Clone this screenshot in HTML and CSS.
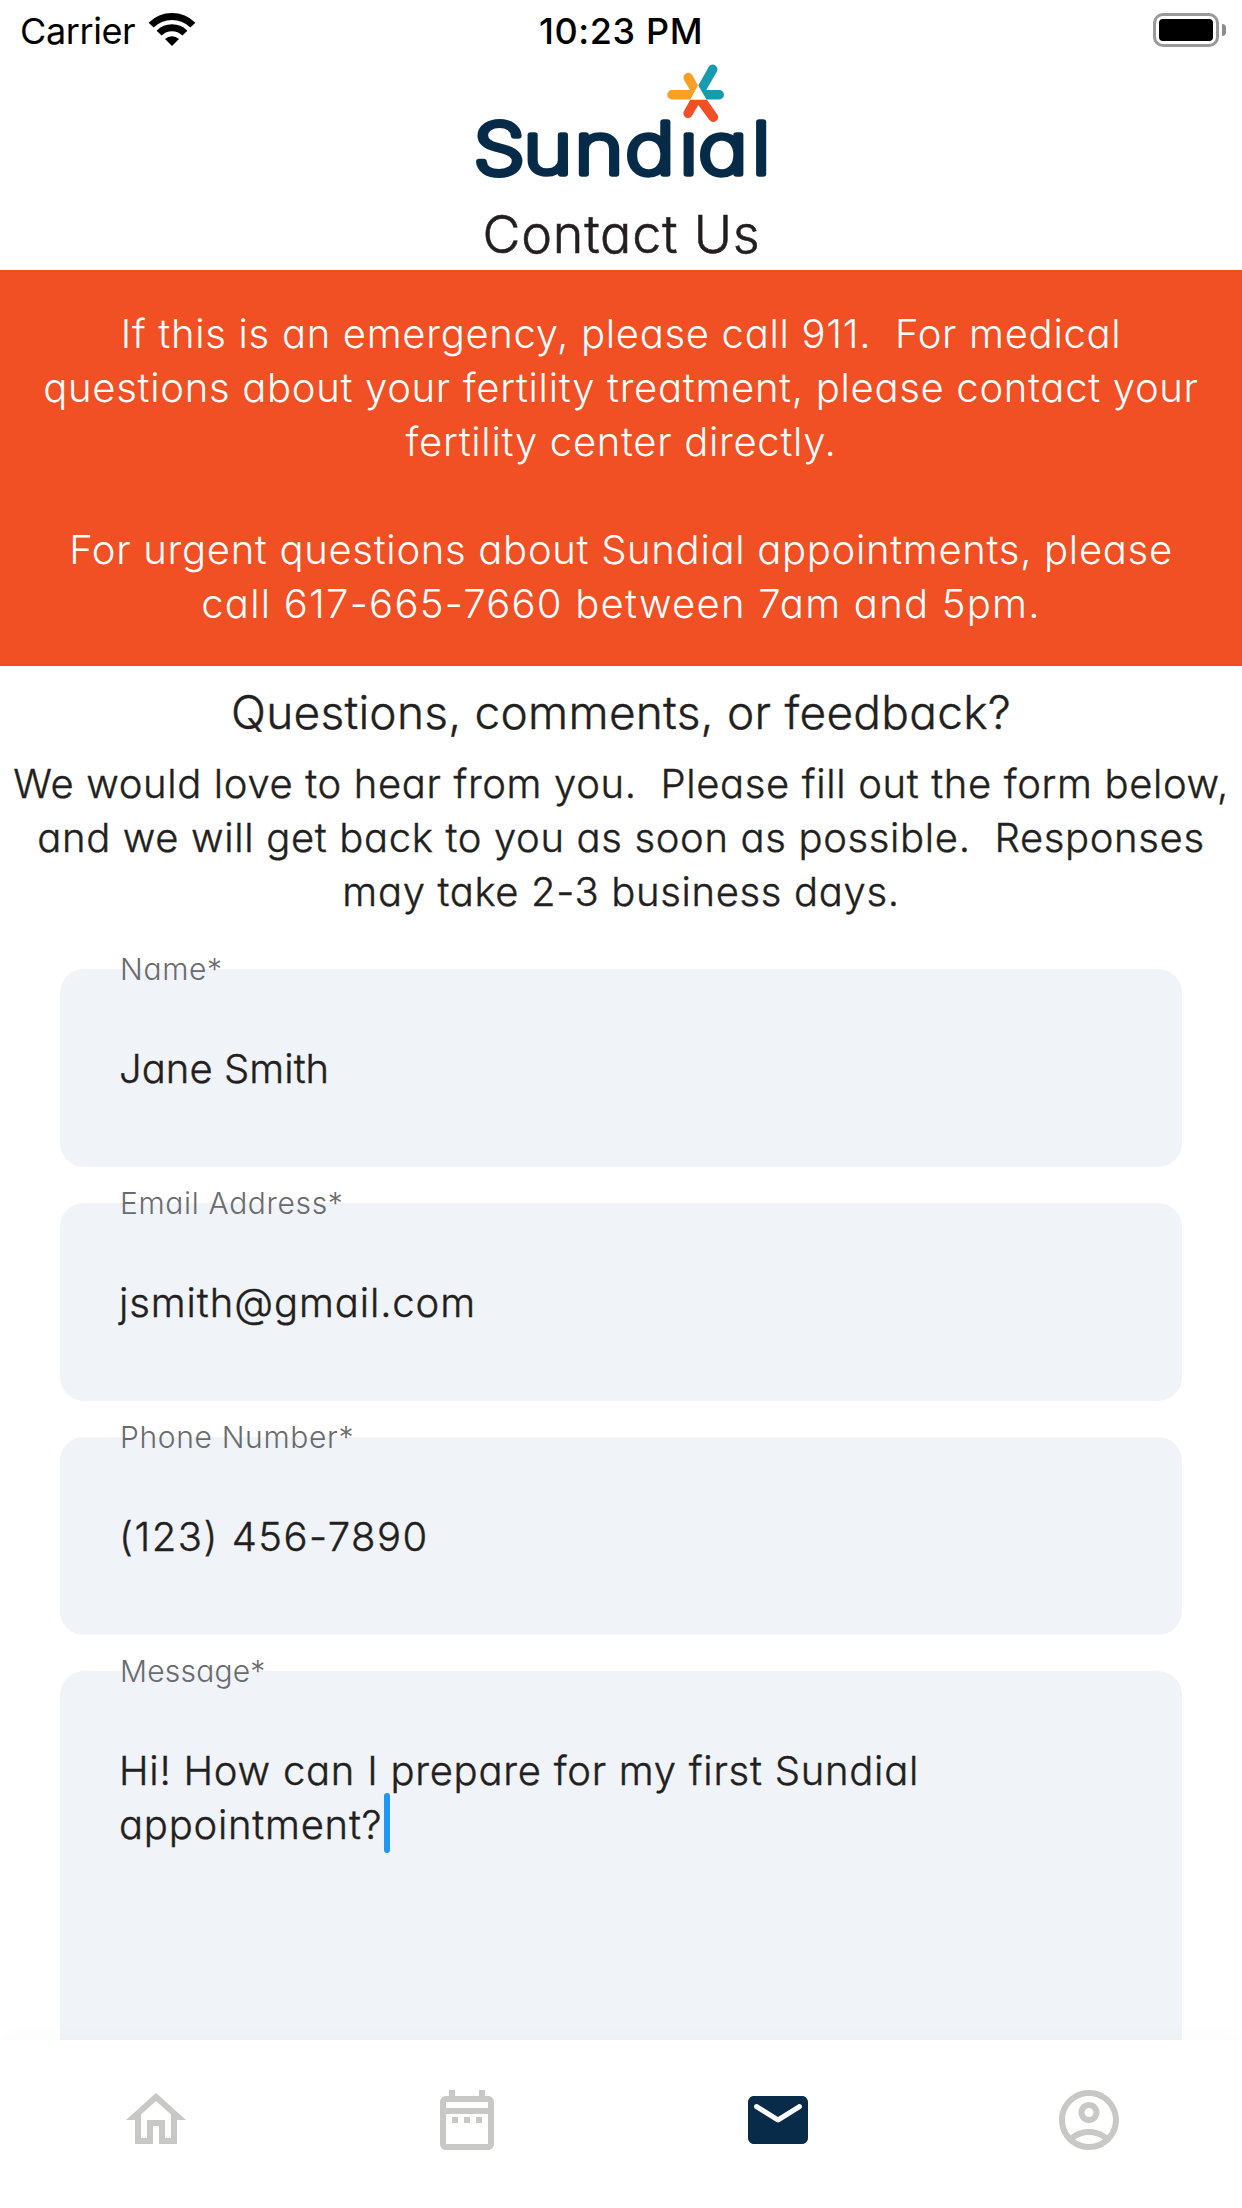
FILE: index.html
```html
<!DOCTYPE html>
<html lang="en">
  <head>
    <meta charset="UTF-8" />
    <meta name="viewport" content="width=device-width, initial-scale=1.0" />
    <title>Contact Us</title>
    <link rel="stylesheet" href="styles.css">
  </head>
  <body>
    <div class="screen">
      <div class="status-bar">
        <div class="carrier">
          <span>Carrier</span>
          <svg class="wifi" viewBox="148 12 48 36">
            <path d="M151.1 25.1A29.5 29.5 0 0 1 192.9 25.1" />
            <path d="M159.1 33.1A18.2 18.2 0 0 1 184.9 33.1" />
            <path class="wifi-dot" d="M165 39A10 10 0 0 1 179 39L172 46Z" />
          </svg>
        </div>
        <div class="time">10:23 PM</div>
        <div class="battery">
          <div class="battery-body"></div>
          <div class="battery-cap"></div>
        </div>
      </div>

      <header class="header">
        <svg class="logo" viewBox="474 64 294 116">
          <path fill="#fa9f25" d="M672 90H690L684 80A4.7 4.7 0 0 1 692.4 75.3L698 85.5L690.3 99.4H672A4.7 4.7 0 0 1 672 90Z" />
          <path fill="#1a9aae" d="M698.3 85.5L708.6 67A4.7 4.7 0 0 1 716.9 71.6L706.3 90H719.3A4.7 4.7 0 0 1 719.3 99.4H706.5Z" />
          <path fill="#f15025" d="M690.3 99.8H707L717.6 115A4.8 4.8 0 0 1 709.4 119.9L698.3 105L692.2 115.6A4.7 4.7 0 0 1 684 111Z" />
          <text class="logo-text" transform="translate(476 0) scale(1.17 1)" x="-2 40.3 84.3 127.5 173.8 190 235.6" y="174"><tspan class="logo-cap">S</tspan>undıal</text>
        </svg>
        <h1>Contact Us</h1>
      </header>

      <section class="alert">
        <p>
          If this is an emergency, please call 911.&nbsp; For medical<br>
          questions about your fertility treatment, please contact your<br>
          fertility center directly.
        </p>
        <p>
          For urgent questions about Sundial appointments, please<br>
          <span class="numbers">call 617-665-7660 between 7am and 5pm.</span>
        </p>
      </section>

      <section class="intro">
        <h2>Questions, comments, or feedback?</h2>
        <p>
          We would love to hear from you.&nbsp; Please fill out the form below,<br>
          and we will get back to you as soon as possible.&nbsp; Responses<br>
          may take 2-3 business days.
        </p>
      </section>

      <main class="form">
        <div class="field">
          <div class="label">Name*</div>
          <div class="value name">Jane Smith</div>
        </div>
        <div class="field">
          <div class="label">Email Address*</div>
          <div class="value email">jsmith@gmail.com</div>
        </div>
        <div class="field">
          <div class="label">Phone Number*</div>
          <div class="value phone">(123) 456-7890</div>
        </div>
        <div class="field message">
          <div class="label">Message*</div>
          <div class="value">Hi! How can I prepare for my first Sundial<br>appointment?<span class="caret"></span></div>
        </div>
      </main>

      <nav class="tabs">
        <a class="tab">
          <svg viewBox="0 0 24 24"><path d="M12 5.69l5 4.5V18h-2v-6H9v6H7v-7.81l5-4.5M12 3L2 12h3v8h6v-6h2v6h6v-8h3L12 3z" /></svg>
        </a>
        <a class="tab">
          <svg viewBox="0 0 24 24"><path d="M7 11h2v2H7zM11 11h2v2h-2zM15 11h2v2h-2zM19 4h-1V2h-2v2H8V2H6v2H5c-1.1 0-2 .9-2 2v14c0 1.1.9 2 2 2h14c1.1 0 2-.9 2-2V6c0-1.1-.9-2-2-2zm0 2v2H5V6h14zM5 20V10h14v10H5z" /></svg>
        </a>
        <a class="tab active">
          <svg viewBox="0 0 24 24"><path d="M20 4H4c-1.1 0-2 .9-2 2v12c0 1.1.9 2 2 2h16c1.1 0 2-.9 2-2V6c0-1.1-.9-2-2-2zm-.4 4.25l-7.07 4.42c-.32.2-.74.2-1.06 0L4.4 8.25c-.25-.16-.4-.43-.4-.72 0-.67.73-1.07 1.3-.72L12 11l6.7-4.19c.57-.35 1.3.05 1.3.72 0 .29-.15.56-.4.72z" /></svg>
        </a>
        <a class="tab">
          <svg viewBox="0 0 24 24"><path d="M12 2C6.48 2 2 6.48 2 12s4.48 10 10 10 10-4.48 10-10S17.52 2 12 2zM7.35 18.5C8.66 17.56 10.26 17 12 17s3.34.56 4.65 1.5c-1.31.94-2.91 1.5-4.65 1.5s-3.34-.56-4.65-1.5zm10.79-1.38C16.45 15.8 14.32 15 12 15s-4.45.8-6.14 2.12C4.7 15.73 4 13.95 4 12c0-4.42 3.58-8 8-8s8 3.58 8 8c0 1.95-.7 3.73-1.86 5.12zM12 6c-1.93 0-3.5 1.57-3.5 3.5S10.07 13 12 13s3.5-1.57 3.5-3.5S13.93 6 12 6zm0 5c-.83 0-1.5-.67-1.5-1.5S11.17 8 12 8s1.5.67 1.5 1.5S12.83 11 12 11z" /></svg>
        </a>
      </nav>
    </div>
  </body>
</html>
```
FILE: styles.css
```css
* {
  box-sizing: border-box;
}
body {
  margin: 0;
  background-color: white;
  color: #231f20;
  font-family: "Inter", sans-serif;
  font-size: 40px;
  font-weight: 300;
  line-height: 54px;
  letter-spacing: 0.65px;
  /* single-storey a */
  font-feature-settings: "cv11";
}
h1,
h2,
p {
  margin: 0;
  font-weight: inherit;
  white-space: nowrap;
}
.screen {
  display: flex;
  flex-direction: column;
  width: 1242px;
  height: 2208px;
  overflow: hidden;
}

/* status bar */
.status-bar {
  display: grid;
  grid-template-columns: 1fr auto 1fr;
  align-items: center;
  height: 60px;
  padding: 0 16px 0 20px;
  color: black;
  font-size: 36px;
  line-height: 56px;
  font-feature-settings: normal;
}
.carrier {
  display: flex;
  align-items: center;
  gap: 13px;
  font-weight: 400;
  letter-spacing: -0.4px;
}
.carrier span,
.time {
  padding-top: 2px;
}
.wifi {
  width: 48px;
  height: 36px;
  fill: none;
  stroke: black;
  stroke-width: 7;
}
.wifi .wifi-dot {
  fill: black;
  stroke: none;
}
.time {
  margin-right: 4px;
  font-weight: 500;
  letter-spacing: 0.6px;
}
.battery {
  display: flex;
  justify-content: flex-end;
  align-items: center;
  gap: 3px;
}
.battery-body {
  width: 66px;
  height: 34px;
  padding: 3px;
  border: 3px solid #999;
  border-radius: 10px;
  background: black content-box;
}
.battery-cap {
  width: 4px;
  height: 12px;
  border-radius: 0 4px 4px 0;
  background-color: #8c8c8c;
}

/* header */
.header {
  display: flex;
  flex-direction: column;
  align-items: center;
  height: 210px;
  padding-top: 4px;
}
.logo {
  width: 294px;
  height: 116px;
  overflow: visible;
}
.logo-text {
  fill: #052b48;
  stroke: #052b48;
  stroke-width: 6;
  stroke-linejoin: round;
  vector-effect: non-scaling-stroke;
  font-size: 71.5px;
  font-weight: 200;
}
.logo-cap {
  font-size: 70px;
}
.header h1 {
  padding: 19px 0 0 1px;
  font-size: 52px;
  line-height: 72px;
  letter-spacing: 0.8px;
  -webkit-text-stroke: 0.6px;
}

.alert {
  display: flex;
  flex-direction: column;
  gap: 54px;
  padding: 37px 0 35px;
  background-color: #f15025;
  color: white;
  letter-spacing: 0.7px;
  text-align: center;
}
.numbers {
  letter-spacing: 1.25px;
}

.intro {
  padding: 16px 0 50px;
  text-align: center;
  -webkit-text-stroke: 0.4px;
}
.intro h2 {
  margin-bottom: 14px;
  font-size: 46px;
  line-height: 61px;
  letter-spacing: 0.25px;
}

/* form */
.form {
  display: flex;
  flex: 1;
  flex-direction: column;
  gap: 36px;
  min-height: 0;
  padding: 0 60px;
}
.field {
  position: relative;
  flex: none;
  height: 198px;
  padding: 73px 59px;
  border-radius: 24px;
  background-color: #f0f3f8;
}
.field.message {
  flex: 1;
  border-radius: 24px 24px 0 0;
}
.label {
  position: absolute;
  top: -18px;
  left: 60px;
  color: #6a6b6e;
  font-size: 30px;
  line-height: 36px;
}
.message .label {
  letter-spacing: 0.2px;
}
.value {
  letter-spacing: 0.75px;
  -webkit-text-stroke: 0.4px;
}
.value.name {
  letter-spacing: 0.05px;
}
.value.email {
  letter-spacing: 0.9px;
}
.value.phone {
  letter-spacing: 1.5px;
}
.caret {
  position: relative;
  top: -5px;
  display: inline-block;
  width: 6px;
  height: 60px;
  margin: -10px 2px;
  border-radius: 3px;
  background-color: #2196f3;
  vertical-align: middle;
}

/* bottom tabs */
.tabs {
  position: relative;
  display: flex;
  height: 168px;
  margin-right: -2px;
  padding-top: 44px;
  background-color: white;
  box-shadow: 0 -4px 18px rgba(0, 0, 0, 0.02);
}
.tab {
  display: flex;
  flex: 1;
  justify-content: center;
}
.tab svg {
  width: 72px;
  height: 72px;
  fill: #c8c8c7;
}
.tab.active svg {
  fill: #082b49;
}
```
